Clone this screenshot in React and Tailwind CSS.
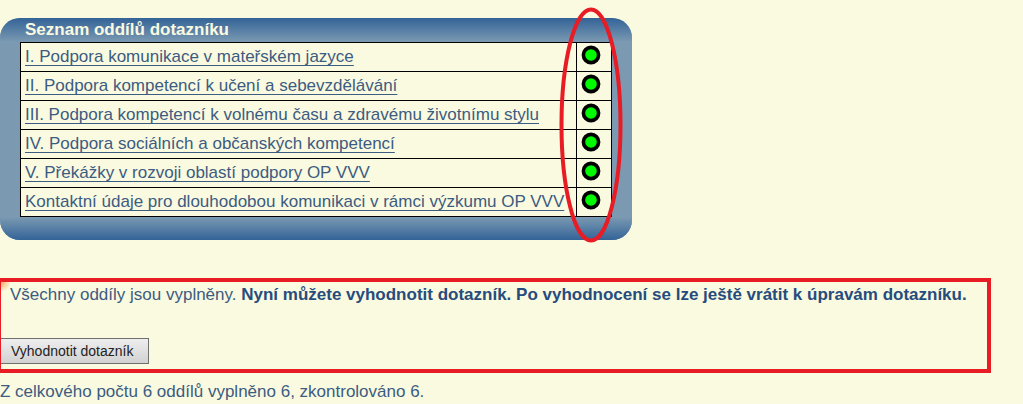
const sections = [
    "I. Podpora komunikace v mateřském jazyce",
    "II. Podpora kompetencí k učení a sebevzdělávání",
    "III. Podpora kompetencí k volnému času a zdravému životnímu stylu",
    "IV. Podpora sociálních a občanských kompetencí",
    "V. Překážky v rozvoji oblastí podpory OP VVV",
    "Kontaktní údaje pro dlouhodobou komunikaci v rámci výzkumu OP VVV",
]

const StatusDot = () => (
    <svg viewBox="0 0 20 20" className="block w-5 h-5" role="img" aria-label="vyplněno">
        <circle cx="10" cy="10" r="7.6" fill="#00fb00" stroke="#000" strokeWidth="3.6" />
    </svg>
)

const SectionList = () => {
    return (
        <div className="relative w-fit rounded-[20px] bg-[#7b9ab2]">
            <div className="rounded-t-[20px] bg-linear-to-b from-[#336397] to-[#7b9ab2] px-5">
                <h1 className="pl-[5px] leading-6 font-bold text-[#fafae0]">Seznam oddílů dotazníku</h1>
            </div>
            <div className="px-5">
                <table className="border-collapse bg-[#fafae0]">
                    <tbody>
                        {sections.map((title, i)=> (
                            <tr key={title} className="h-[29px]">
                                <td className="border border-black py-0 pl-1 pr-3 leading-7">
                                    <a href={"#oddil-"+(i + 1)} className="whitespace-nowrap underline decoration-1 underline-offset-3 [text-decoration-skip-ink:none]">{title}</a>
                                </td>
                                <td className="border border-black pt-0 pb-1 pl-1 pr-[10px]"><StatusDot /></td>
                            </tr>
                        ))}
                    </tbody>
                </table>
            </div>
            <div className="h-[23px] rounded-b-[20px] bg-linear-to-b from-[#7b9ab2] to-[#336397]"></div>

            {/* red oval around the status column */}
            <svg viewBox="0 0 64 236" className="absolute -top-[11px] right-[9px] w-16 h-[236px] pointer-events-none" aria-hidden="true">
                <ellipse cx="32" cy="118" rx="29.5" ry="115.5" fill="none" stroke="#e81c24" strokeWidth="4" />
            </svg>
        </div>
    )
}

const App = () => {
    return (
        <main className="min-h-screen pt-[18px] bg-[#fafae0] text-[#3c5c82] text-[17px] font-['Liberation_Sans',Arial,sans-serif]">
            <SectionList />

            <section className="mt-[38px] mr-8 border-4 border-l border-[#e81c24] bg-[radial-gradient(circle_at_top_left,#f9a860_0px,#fafae0_10px)]">
                <p className="pl-[9px] leading-[26px]">
                    Všechny oddíly jsou vyplněny. <strong className="text-[#264c7e]">Nyní můžete vyhodnotit dotazník. Po vyhodnocení se lze ještě vrátit k úpravám dotazníku.</strong>
                </p>
                <button type="button" className="block mt-[30px] mb-[5px] h-[26px] pl-[10px] pr-[15px] border border-l-0 border-[#707070] bg-linear-to-b from-[#eeeeee] to-[#d2d2d2] text-[14px] leading-6 text-[#222]">Vyhodnotit dotazník</button>
            </section>

            <p className="mt-[6px] leading-[26px]">Z celkového počtu 6 oddílů vyplněno 6, zkontrolováno 6.</p>
        </main>
    )
}

export default App
